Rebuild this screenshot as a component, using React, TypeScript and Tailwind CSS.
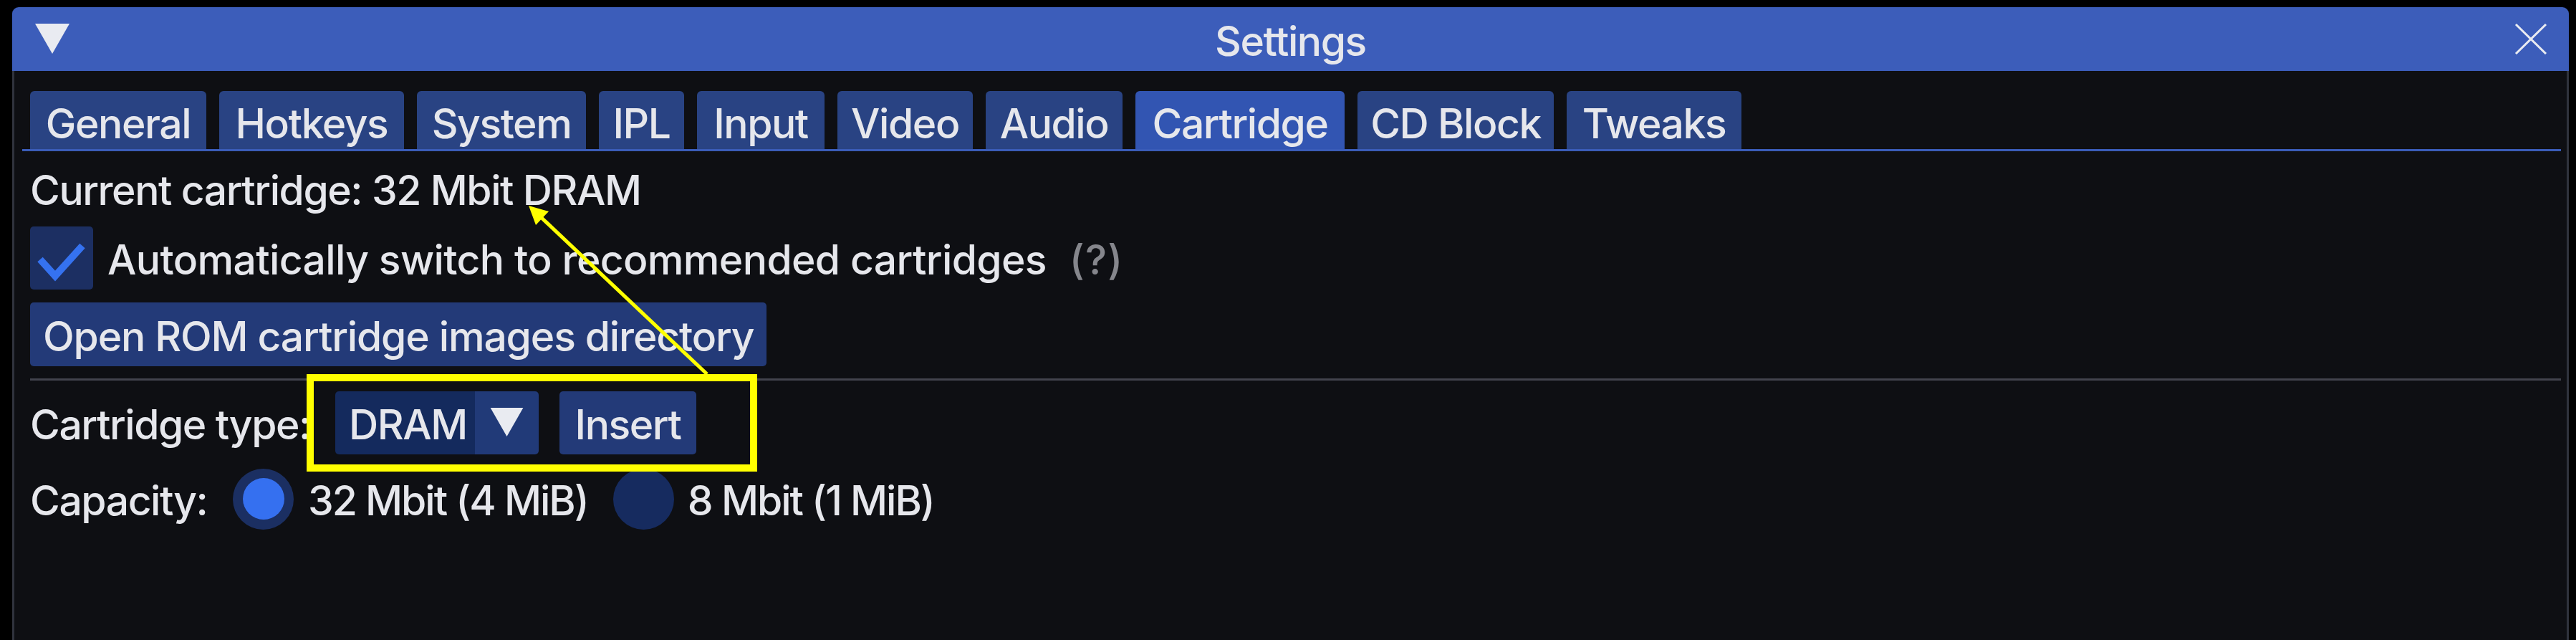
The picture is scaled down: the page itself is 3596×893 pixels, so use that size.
import React from "react";

const tabs = [
  { label: "General", w: "w-[246px]" },
  { label: "Hotkeys", w: "w-[258px]" },
  { label: "System", w: "w-[236px]" },
  { label: "IPL", w: "w-[119px]" },
  { label: "Input", w: "w-[178px]" },
  { label: "Video", w: "w-[189px]" },
  { label: "Audio", w: "w-[191px]" },
  { label: "Cartridge", w: "w-[292px]", active: true },
  { label: "CD Block", w: "w-[274px]" },
  { label: "Tweaks", w: "w-[244px]" },
];

function DownTriangle({ className }: { className?: string }) {
  return (
    <svg viewBox="0 0 48 42" className={className}>
      <polygon points="0,0 48,0 24,42" fill="#e9ebf1" />
    </svg>
  );
}

function TitleBar() {
  return (
    <div className="relative h-[89px] shrink-0 bg-[#3c5dba] text-center">
      <DownTriangle className="absolute left-[32px] top-[23px] h-[42px] w-[48px]" />
      <span className="inline-block pt-[6px] leading-[83px]">Settings</span>
      <svg viewBox="0 0 46 43" className="absolute right-[30px] top-[23px] h-[43px] w-[46px]">
        <path d="M2 1 L44 42 M44 1 L2 42" stroke="#e9ebf1" strokeWidth="3" fill="none" />
      </svg>
    </div>
  );
}

function TabBar() {
  return (
    <div className="mt-[28px]">
      <div className="flex h-[81px] gap-[18px] pl-[11px]">
        {tabs.map((t) => (
          <div
            key={t.label}
            className={`${t.w} rounded-t-[6px] pt-[10px] text-center leading-[71px] whitespace-nowrap ${
              t.active ? "bg-[#3255b2]" : "bg-[#294383]"
            }`}
          >
            {t.label}
          </div>
        ))}
      </div>
      <div className="h-[3px] bg-[#3a5cb8]" />
    </div>
  );
}

function Annotation() {
  return (
    <svg
      className="pointer-events-none absolute left-0 top-0 h-[893px] w-[3596px]"
      viewBox="0 0 3596 893"
    >
      <rect x="433" y="527" width="619" height="126" fill="none" stroke="#ffff00" strokeWidth="10" />
      <line x1="987" y1="522" x2="754" y2="302" stroke="#ffff00" strokeWidth="5" />
      <polygon points="738,287 766,295 748,314" fill="#ffff00" />
    </svg>
  );
}

export default function App() {
  return (
    <div className="relative h-[893px] w-[3596px] overflow-hidden bg-black pl-[17px] pr-[10px] pt-[10px] font-[Inter,sans-serif] text-[57px] font-medium tracking-[-0.025em] text-[#e6e7ec]">
      <div className="flex h-full flex-col overflow-hidden rounded-t-[9px]">
        <TitleBar />
        <div className="flex-1 border-x-[3px] border-[#30333d] bg-[#0e0f13] pl-[11px] pr-[8px]">
          <TabBar />
          <div className="pl-[11px]">
            <div className="mt-[8px] h-[88px] pt-[6px] leading-[82px] whitespace-nowrap">
              Current cartridge: 32 Mbit DRAM
            </div>

            <div className="mt-[9px] flex h-[88px] items-start whitespace-nowrap">
              <div className="h-[88px] w-[88px] shrink-0 rounded-[5px] bg-[#1c2f62]">
                <svg viewBox="0 0 88 88" className="h-[88px] w-[88px]">
                  <polyline points="14,46 35,69 73,27" fill="none" stroke="#3572f0" strokeWidth="10" />
                </svg>
              </div>
              <span className="ml-[20px] pt-[6px] leading-[82px] tracking-[-0.011em]">
                Automatically switch to recommended cartridges
              </span>
              <span className="ml-[32px] pt-[6px] leading-[82px] tracking-[0.02em] text-[#85868c]">(?)</span>
            </div>

            <div className="mt-[18px] flex">
              <button className="h-[89px] rounded-[5px] bg-[#233a78] px-[18px] pt-[6px] leading-[83px] tracking-[-0.02em] whitespace-nowrap">
                Open ROM cartridge images directory
              </button>
            </div>

            <div className="mt-[17px] h-[3px] bg-[#42434d]" />

            <div className="mt-[15px] flex h-[88px] items-start whitespace-nowrap">
              <span className="w-[426px] shrink-0 pt-[6px] leading-[82px]">Cartridge type:</span>
              <div className="flex h-[88px] w-[284px] overflow-hidden rounded-[5px]">
                <span className="w-[195px] bg-[#142a5d] pl-[19px] pt-[6px] leading-[82px]">DRAM</span>
                <div className="flex w-[89px] items-start bg-[#213a78] pl-[20px] pt-[23px]">
                  <DownTriangle className="h-[40px] w-[49px]" />
                </div>
              </div>
              <button className="ml-[29px] h-[88px] w-[191px] rounded-[5px] bg-[#233a78] pt-[6px] text-center leading-[82px]">
                Insert
              </button>
            </div>

            <div className="mt-[18px] flex h-[88px] items-center whitespace-nowrap">
              <span className="w-[283px] shrink-0 pt-[6px] leading-[82px]">Capacity:</span>
              <div className="flex h-[85px] w-[85px] shrink-0 items-center justify-center rounded-full bg-[#1b2f62]">
                <div className="h-[58px] w-[58px] rounded-full bg-[#3570f0]" />
              </div>
              <span className="ml-[20px] pt-[6px] leading-[82px] tracking-[-0.035em]">32 Mbit (4 MiB)</span>
              <div className="ml-[35px] h-[85px] w-[85px] shrink-0 rounded-full bg-[#162b5f]" />
              <span className="ml-[19px] pt-[6px] leading-[82px] tracking-[-0.035em]">8 Mbit (1 MiB)</span>
            </div>
          </div>
        </div>
      </div>
      <Annotation />
    </div>
  );
}
